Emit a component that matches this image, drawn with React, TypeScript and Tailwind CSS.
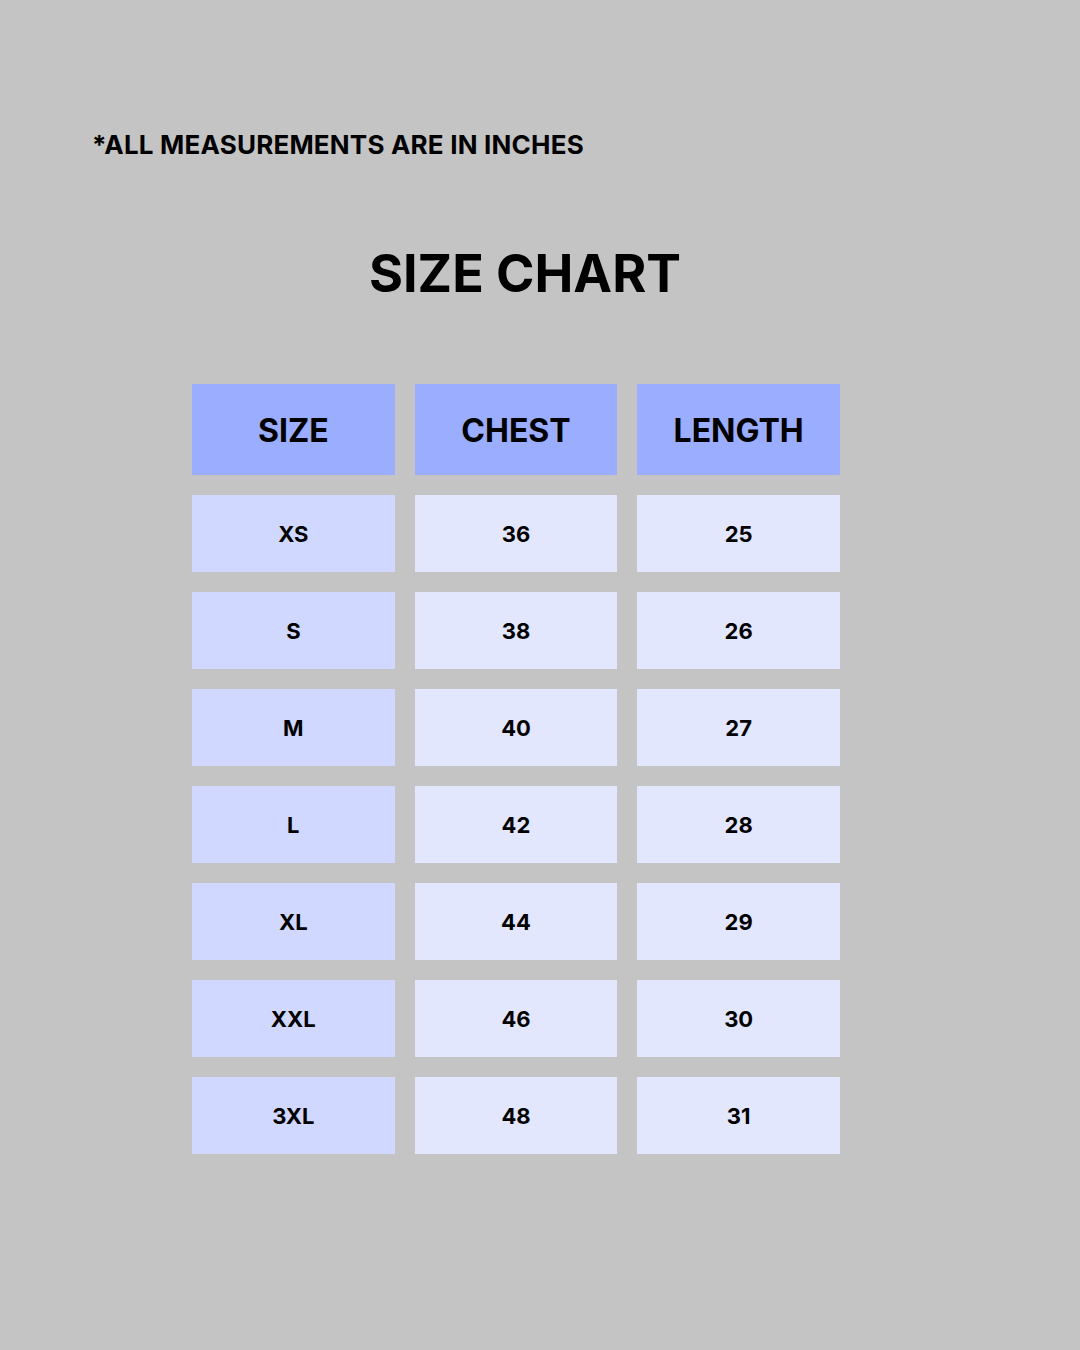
const ROWS = [
  ['XS', '36', '25'],
  ['S', '38', '26'],
  ['M', '40', '27'],
  ['L', '42', '28'],
  ['XL', '44', '29'],
  ['XXL', '46', '30'],
  ['3XL', '48', '31'],
];

const HEADERS = ['SIZE', 'CHEST', 'LENGTH'];

export default function App() {
  return (
    <div className="w-[1080px] h-[1350px] bg-[#c4c4c4] text-black font-['Inter',sans-serif] flex flex-col">
      <p className="pl-[92px] pt-[132px] text-[26px] leading-none font-bold tracking-[0.2px]">
        *ALL MEASUREMENTS ARE IN INCHES
      </p>

      <h1 className="mt-[90px] pr-[30px] text-center text-[52px] leading-none font-bold">
        SIZE CHART
      </h1>

      <div className="mt-[84px] ml-[192px] w-[648px] grid grid-cols-3 gap-x-[20px] gap-y-[20px]">
        {HEADERS.map((h) => (
          <div key={h} className="h-[91px] pt-[2px] bg-[#9aadff] flex items-center justify-center text-[32px] font-bold">
            {h}
          </div>
        ))}
        {ROWS.map((row) =>
          row.map((cell, i) => (
            <div
              key={row[0] + i}
              className={`h-[77px] pt-[2px] flex items-center justify-center text-[22px] font-bold ${
                i === 0 ? 'bg-[#d0d8ff]' : 'bg-[#e3e7fd]'
              }`}
            >
              {cell}
            </div>
          ))
        )}
      </div>
    </div>
  );
}
